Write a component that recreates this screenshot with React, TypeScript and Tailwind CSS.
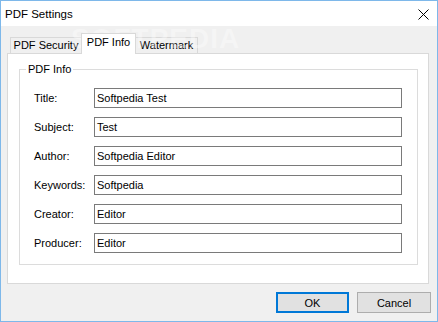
import React from "react";

const font = { fontFamily: '"Liberation Sans", Arial, sans-serif' };

const fields: [string, string][] = [
  ["Title:", "Softpedia Test"],
  ["Subject:", "Test"],
  ["Author:", "Softpedia Editor"],
  ["Keywords:", "Softpedia"],
  ["Creator:", "Editor"],
  ["Producer:", "Editor"],
];

export default function App() {
  return (
    <div
      className="relative w-[438px] h-[322px] border border-[#7eb8ea] bg-[#f0f0f0] flex flex-col text-[11px] text-black overflow-hidden"
      style={font}
    >
      {/* Title bar */}
      <div className="h-[25px] bg-white flex items-center justify-between pl-[4px] pr-[8px] shrink-0">
        <span className="text-[11.5px] leading-[14px]">PDF Settings</span>
        <svg width="11" height="11" viewBox="0 0 11 11" className="mt-[1px]">
          <path d="M0.5 0.5 L10.5 10.5 M10.5 0.5 L0.5 10.5" stroke="#000" strokeWidth="1" />
        </svg>
      </div>

      {/* Body */}
      <div className="flex flex-col pt-[7px]">
        {/* Tabs */}
        <div className="flex items-end h-[20px] pl-[9px]">
          <div className="w-[71px] h-[16px] border-l border-t border-[#d9d9d9] flex items-center justify-center bg-[#f0f0f0]">
            PDF Security
          </div>
          <div className="relative z-10 w-[55px] h-[21px] -mb-px border-l border-t border-r border-[#d9d9d9] bg-white flex items-center justify-center pb-[3px]">
            PDF Info
          </div>
          <div className="w-[62px] h-[16px] border-t border-r border-[#d9d9d9] flex items-center justify-center bg-[#f0f0f0]">
            Watermark
          </div>
        </div>

        {/* Panel */}
        <div className="ml-[6px] w-[422px] h-[231px] border border-[#d9d9d9] bg-white pt-[15px] pl-[11px] pr-[10px]">
          <div className="relative h-[196px] border border-[#dcdcdc] pt-[18px] pl-[14px] pr-[15px] flex flex-col gap-[9px]">
            <span className="absolute left-[6px] top-[-8px] px-[2px] bg-white leading-[14px]">PDF Info</span>
            {fields.map(([label, value]) => (
              <div key={label} className="flex items-center h-[20px]">
                <span className="w-[60px] shrink-0 leading-[14px]">{label}</span>
                <div className="flex-1 h-[20px] border border-[#7a7a7a] bg-white flex items-center pl-[2px] leading-[14px]">
                  {value}
                </div>
              </div>
            ))}
          </div>
        </div>

        {/* Buttons */}
        <div className="flex justify-end gap-[8px] mt-[8px] pr-[6px]">
          <button className="w-[73px] h-[21px] border-2 border-[#0078d7] bg-[#e1e1e1] flex items-center justify-center leading-[14px]">
            OK
          </button>
          <button className="w-[74px] h-[21px] border border-[#adadad] bg-[#e1e1e1] flex items-center justify-center leading-[14px]">
            Cancel
          </button>
        </div>
      </div>

      {/* Watermark overlay */}
      <span
        className="pointer-events-none absolute left-[70px] top-[22px] text-[28px] font-bold leading-[32px] text-white/35 tracking-[1px]"
        style={font}
      >
        SOFTPEDIA
      </span>
    </div>
  );
}
